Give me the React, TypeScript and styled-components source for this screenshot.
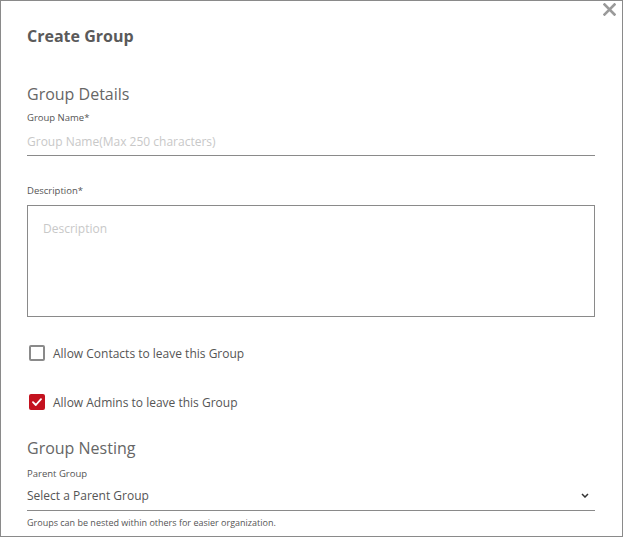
import React from "react";
import styled, { createGlobalStyle } from "styled-components";

const Global = createGlobalStyle`
  html, body { margin: 0; padding: 0; background: #fff; }
  body { font-family: "Open Sans", sans-serif; }
  * { box-sizing: border-box; }
`;

const Dialog = styled.div`
  position: relative;
  width: 623px;
  height: 537px;
  border: 1px solid #8a8a8a;
  padding: 24px 27px 0 26px;
  font-family: "Open Sans", sans-serif;
  color: #555;
  display: flex;
  flex-direction: column;
  overflow: hidden;
`;

const CloseButton = styled.button`
  position: absolute;
  top: 1px;
  right: 5px;
  width: 15px;
  height: 15px;
  padding: 0;
  border: none;
  background: transparent;
  cursor: pointer;
  display: flex;
  align-items: center;
  justify-content: center;
`;

const Title = styled.h1`
  margin: 0;
  font-size: 16px;
  line-height: 22px;
  font-weight: 700;
  color: #5a5a5a;
`;

const SectionHeading = styled.h2<{ $gap: number }>`
  margin: ${(p) => p.$gap}px 0 0;
  font-size: 16px;
  line-height: 24px;
  font-weight: 400;
  color: #666;
`;

const Label = styled.label<{ $gap: number }>`
  display: block;
  margin-top: ${(p) => p.$gap}px;
  font-size: 9.5px;
  line-height: 14px;
  color: #555;
`;

const LineInput = styled.input`
  display: block;
  width: 100%;
  height: 31px;
  padding: 7px 0 4px;
  border: none;
  border-bottom: 1px solid #8a8a8a;
  font-family: "Open Sans", sans-serif;
  font-size: 12px;
  line-height: 19px;
  color: #555;
  outline: none;
  &::placeholder { color: #c8c8c8; }
`;

const TextArea = styled.textarea`
  display: block;
  width: 100%;
  height: 112px;
  margin-top: 7px;
  padding: 13px 15px;
  border: 1px solid #8a8a8a;
  border-radius: 0;
  font-family: "Open Sans", sans-serif;
  font-size: 12px;
  line-height: 20px;
  color: #555;
  resize: none;
  outline: none;
  &::placeholder { color: #c8c8c8; }
`;

const CheckRow = styled.label<{ $gap: number }>`
  display: flex;
  align-items: center;
  gap: 8px;
  height: 16px;
  margin-top: ${(p) => p.$gap}px;
  padding-left: 2px;
  font-size: 12px;
  color: #555;
  cursor: pointer;
`;

const Box = styled.span<{ $checked: boolean }>`
  width: 16px;
  height: 16px;
  flex: none;
  border-radius: 2px;
  border: 2px solid ${(p) => (p.$checked ? "#c4121f" : "#8a8a8a")};
  background: ${(p) => (p.$checked ? "#c4121f" : "#fff")};
  display: flex;
  align-items: center;
  justify-content: center;
`;

const SelectBox = styled.div`
  display: flex;
  align-items: center;
  justify-content: space-between;
  height: 30px;
  padding: 5px 6px 5px 0;
  border-bottom: 1px solid #8a8a8a;
  font-size: 12px;
  line-height: 19px;
  color: #555;
  cursor: pointer;
`;

const Helper = styled.p`
  margin: 6px 0 0;
  font-size: 9px;
  line-height: 12px;
  color: #555;
`;

function Checkbox({ checked, label, gap }: { checked: boolean; label: string; gap: number }) {
  return (
    <CheckRow $gap={gap}>
      <Box $checked={checked}>
        {checked && (
          <svg width="10" height="8" viewBox="0 0 10 8">
            <path d="M1 4.2 L3.8 7 L9 1.2" fill="none" stroke="#fff" strokeWidth="1.8" strokeLinecap="round" strokeLinejoin="round" />
          </svg>
        )}
      </Box>
      {label}
    </CheckRow>
  );
}

export default function App() {
  return (
    <>
      <Global />
      <Dialog>
        <CloseButton aria-label="Close">
          <svg width="13" height="13" viewBox="0 0 13 13">
            <path d="M1.5 1.5 L11.5 11.5 M11.5 1.5 L1.5 11.5" stroke="#9a9a9a" strokeWidth="2.6" strokeLinecap="square" />
          </svg>
        </CloseButton>
        <Title>Create Group</Title>
        <SectionHeading $gap={35}>Group Details</SectionHeading>
        <Label $gap={5}>Group Name*</Label>
        <LineInput placeholder="Group Name(Max 250 characters)" />
        <Label $gap={28}>Description*</Label>
        <TextArea placeholder="Description" />
        <Checkbox gap={28} checked={false} label="Allow Contacts to leave this Group" />
        <Checkbox gap={33} checked={true} label="Allow Admins to leave this Group" />
        <SectionHeading $gap={26}>Group Nesting</SectionHeading>
        <Label $gap={7}>Parent Group</Label>
        <SelectBox>
          <span>Select a Parent Group</span>
          <svg width="8" height="5" viewBox="0 0 8 5">
            <path d="M1 1 L4 4 L7 1" fill="none" stroke="#333" strokeWidth="1.5" />
          </svg>
        </SelectBox>
        <Helper>Groups can be nested within others for easier organization.</Helper>
      </Dialog>
    </>
  );
}
